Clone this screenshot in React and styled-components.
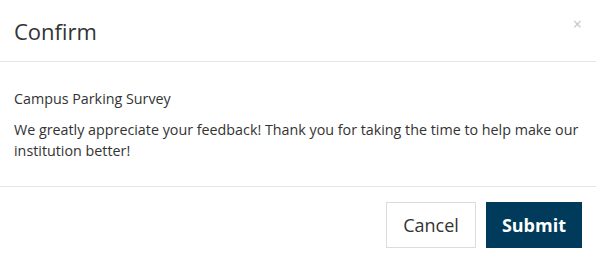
import React from 'react';
import styled, { createGlobalStyle } from 'styled-components';

const Global = createGlobalStyle`
  html, body { margin: 0; padding: 0; background: #fff; }
  body { font-family: "Open Sans", "Noto Sans", sans-serif; color: #333; }
`;

const Modal = styled.div`
  width: 596px;
  height: 264px;
  background: #fff;
  display: flex;
  flex-direction: column;
`;

const Header = styled.div`
  height: 62px;
  box-sizing: border-box;
  padding: 0 15px 0 14px;
  display: flex;
  align-items: center;
  justify-content: space-between;
  border-bottom: 1px solid #e5e5e5;
`;

const Title = styled.h4`
  margin: 0;
  font-size: 22px;
  font-weight: 400;
  color: #333;
`;

const Close = styled.span`
  font-size: 16px;
  color: #c4c4c4;
  margin-top: -14px;
  margin-right: -1px;
`;

const Body = styled.div`
  padding: 26px 15px 25px 14px;
  font-size: 14.3px;
  line-height: 21px;
  border-bottom: 1px solid #e5e5e5;
`;

const Para = styled.p`
  margin: 0 0 ${p => p.$gap || 0}px;
`;

const Footer = styled.div`
  display: flex;
  justify-content: flex-end;
  gap: 10px;
  padding: 15px 14px;
`;

const Button = styled.button`
  height: 46px;
  padding: 0 ${p => (p.$primary ? 15 : 16)}px;
  font-family: inherit;
  font-size: 18px;
  border-radius: 0;
  cursor: pointer;
  border: 1px solid ${p => (p.$primary ? '#003b5c' : '#dcdcdc')};
  background: ${p => (p.$primary ? '#003b5c' : '#fff')};
  color: ${p => (p.$primary ? '#fff' : '#333')};
  font-weight: ${p => (p.$primary ? 700 : 400)};
`;

export default function App() {
  return (
    <>
      <Global />
      <Modal>
        <Header>
          <Title>Confirm</Title>
          <Close>×</Close>
        </Header>
        <Body>
          <Para $gap={10}>Campus Parking Survey</Para>
          <Para>
            We greatly appreciate your feedback! Thank you for taking the time to help make our
            institution better!
          </Para>
        </Body>
        <Footer>
          <Button>Cancel</Button>
          <Button $primary>Submit</Button>
        </Footer>
      </Modal>
    </>
  );
}
